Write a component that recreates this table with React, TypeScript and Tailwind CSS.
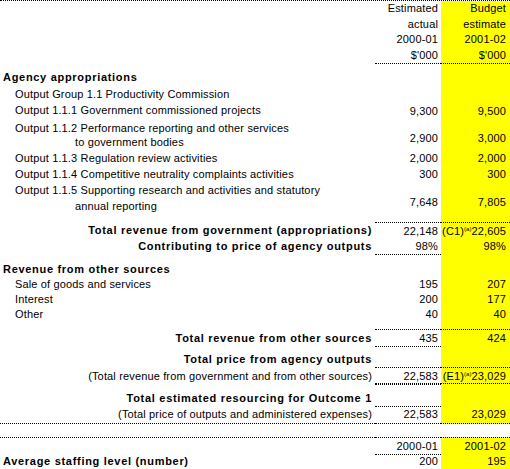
import React from 'react';

type RowProps = {
  h: string;
  label?: React.ReactNode;
  a?: React.ReactNode;
  b?: React.ReactNode;
  labelCls?: string;
  cellCls?: string;
  line?: string;
  labelLine?: string;
  plain?: boolean;
};

const DOT = 'border-dotted border-black';
const BOLD_L = 'items-center pl-[3px] font-bold tracking-[0.7px]';
const BOLD_R = 'items-center justify-end pr-[3px] font-bold tracking-[0.7px]';
const ITEM = 'items-center pl-[15px]';
const NOTE_R = 'items-center justify-end pr-[3px]';

function Row({ h, label, a, b, labelCls = '', cellCls = 'items-center', line = '', labelLine = '', plain = false }: RowProps) {
  return (
    <div className={`grid grid-cols-[375px_66px_69px] ${h}`}>
      <div className={`flex whitespace-nowrap ${labelCls} ${labelLine}`}>{label}</div>
      <div className={`flex justify-end pr-[3px] leading-[16px] whitespace-nowrap ${cellCls} ${line}`}>{a}</div>
      <div className={`flex justify-end pr-[4px] leading-[16px] whitespace-nowrap ${cellCls} ${line} ${plain ? '' : 'bg-[#ffff00]'}`}>{b}</div>
    </div>
  );
}

function Two({ first, second }: { first: string; second: string }) {
  return (
    <div className="flex flex-col justify-center">
      <span>{first}</span>
      <span className="pl-[60px]">{second}</span>
    </div>
  );
}

function Ref({ code, value }: { code: string; value: string }) {
  return (
    <span>
      {code}
      <span className="relative -top-[4px] text-[6px] leading-none tracking-normal">(a)</span>
      {value}
    </span>
  );
}

export default function App() {
  return (
    <div className="w-[510px] h-[469px] bg-white text-black text-[11px] tracking-[0.15px] font-['Liberation_Sans',Arial,sans-serif] overflow-hidden">
      <div className={`border-t ${DOT}`}>
        {/* column headings */}
        <div className="grid grid-cols-[375px_66px_69px] h-[63px]">
          <div />
          <div className={`flex flex-col items-end pr-[3px] leading-[15.5px] border-b ${DOT}`}>
            <span>Estimated</span>
            <span>actual</span>
            <span>2000-01</span>
            <span>$'000</span>
          </div>
          <div className={`flex flex-col items-end pr-[4px] leading-[15.5px] bg-[#ffff00] border-b ${DOT}`}>
            <span>Budget</span>
            <span>estimate</span>
            <span>2001-02</span>
            <span>$'000</span>
          </div>
        </div>

        <Row h="h-[5px]" />
        <Row h="h-[17px]" labelCls={BOLD_L} label="Agency appropriations" />
        <Row h="h-[16px]" labelCls={ITEM} label="Output Group 1.1 Productivity Commission" />
        <Row h="h-[17px]" labelCls={ITEM} label="Output 1.1.1 Government commissioned projects" a="9,300" b="9,500" />
        <Row
          h="h-[31px]"
          labelCls="pl-[15px] leading-[14px]"
          cellCls="items-end pb-[4px]"
          label={<Two first="Output 1.1.2 Performance reporting and other services" second="to government bodies" />}
          a="2,900"
          b="3,000"
        />
        <Row h="h-[16px]" labelCls={ITEM} label="Output 1.1.3 Regulation review activities" a="2,000" b="2,000" />
        <Row h="h-[16px]" labelCls={ITEM} label="Output 1.1.4 Competitive neutrality complaints activities" a="300" b="300" />
        <Row
          h="h-[32px]"
          labelCls="pl-[15px] leading-[16px]"
          cellCls="items-end pb-[4px]"
          label={<Two first="Output 1.1.5 Supporting research and activities and statutory" second="annual reporting" />}
          a="7,648"
          b="7,805"
        />
        <Row h="h-[8px]" />
        <Row
          h="h-[16px]"
          line={`border-t ${DOT}`}
          labelCls={BOLD_R}
          label="Total revenue from government (appropriations)"
          a="22,148"
          b={<Ref code="(C1)" value="22,605" />}
        />
        <Row h="h-[16px]" line={`border-b ${DOT}`} labelCls={BOLD_R} label="Contributing to price of agency outputs" a="98%" b="98%" />
        <Row h="h-[7px]" />
        <Row h="h-[15px]" labelCls={BOLD_L} label="Revenue from other sources" />
        <Row h="h-[15px]" labelCls={ITEM} label="Sale of goods and services" a="195" b="207" />
        <Row h="h-[15px]" labelCls={ITEM} label="Interest" a="200" b="177" />
        <Row h="h-[16px]" labelCls={ITEM} label="Other" a="40" b="40" />
        <Row h="h-[7px]" />
        <Row h="h-[17px]" line={`border-y ${DOT}`} labelCls={BOLD_R} label="Total revenue from other sources" a="435" b="424" />
        <Row h="h-[5px]" />
        <Row h="h-[17px]" line={`border-b ${DOT}`} labelCls={BOLD_R} label="Total price from agency outputs" />
        <Row
          h="h-[14px]"
          line={`border-b ${DOT}`}
          labelCls={NOTE_R}
          label="(Total revenue from government and from other sources)"
          a="22,583"
          b={<Ref code="(E1)" value="23,029" />}
        />
        <Row h="h-[2px]" line={`border-b ${DOT}`} />
        <Row h="h-[6px]" />
        <Row h="h-[16px]" line={`border-b ${DOT}`} labelCls={BOLD_R} label="Total estimated resourcing for Outcome 1" />
        <Row
          h="h-[16px]"
          line={`border-b ${DOT}`}
          labelLine={`border-b ${DOT}`}
          labelCls={NOTE_R}
          label="(Total price of outputs and administered expenses)"
          a="22,583"
          b="23,029"
        />
        <Row h="h-[15px]" plain />
        <Row h="h-[16px]" line={`border-y ${DOT}`} labelLine={`border-t ${DOT}`} a="2000-01" b="2001-02" />
        <Row
          h="h-[15px]"
          line={`border-b ${DOT}`}
          labelLine={`border-b ${DOT}`}
          labelCls={BOLD_L}
          label="Average staffing level (number)"
          a="200"
          b="195"
        />
      </div>
    </div>
  );
}
